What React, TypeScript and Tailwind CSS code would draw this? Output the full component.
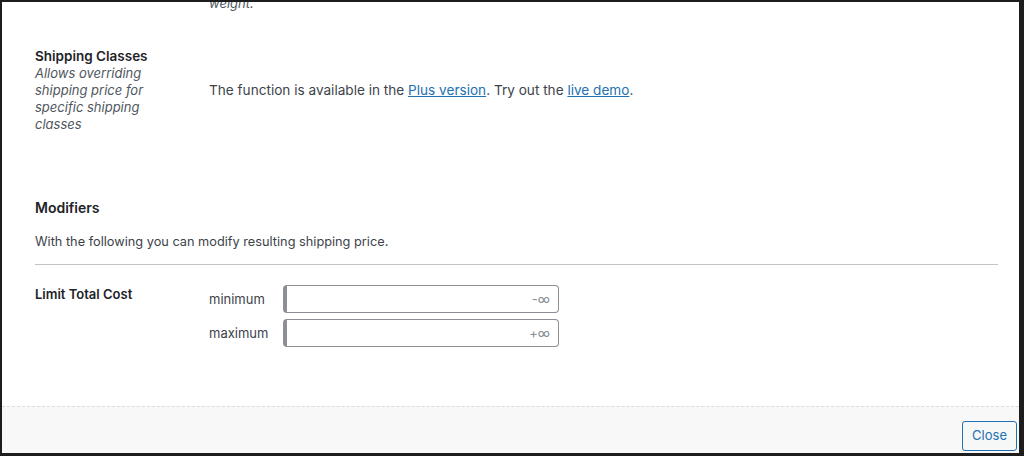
export default function App() {
  return (
    <div
      className="flex h-[456px] w-[1024px] flex-col overflow-hidden border-t-2 border-r-[5px] border-b-[3px] border-l-2 border-[#1d1d1d] bg-white text-[13px] text-[#3c434a]"
      style={{ fontFamily: "Inter, 'Noto Sans', sans-serif" }}
    >
      {/* scrolled body */}
      <div className="flex-1 overflow-hidden pr-[21px] pl-[33px]">
        <div className="-mt-[7px] pl-[174px] text-[13px] leading-[17px] text-[#50575e] italic">weight.</div>

        <div className="mt-[35px] flex">
          <div className="w-[174px] shrink-0">
            <div className="text-[13.5px] leading-[18px] font-semibold text-[#1d2327]">Shipping Classes</div>
            <div className="w-[120px] text-[13px] leading-[17px] text-[#50575e] italic">
              Allows overriding shipping price for specific shipping classes
            </div>
          </div>
          <div className="pt-[34px] text-[13.6px] leading-[18px]">
            The function is available in the{" "}
            <a href="#" className="text-[#2271b1] underline">Plus version</a>. Try out the{" "}
            <a href="#" className="text-[#2271b1] underline">live demo</a>.
          </div>
        </div>

        <div className="mt-[65px] text-[14px] leading-[20px] font-semibold text-[#1d2327]">Modifiers</div>
        <div className="mt-[15px] text-[12.75px] leading-[18px]">With the following you can modify resulting shipping price.</div>
        <div className="mt-[13px] border-t border-[#c3c4c7]" />

        <div className="mt-[20px] flex">
          <div className="w-[174px] shrink-0 text-[13px] leading-[18px] font-semibold text-[#1d2327]">Limit Total Cost</div>
          <div className="flex flex-col gap-[6px]">
            <Limit label="minimum" placeholder="-∞" />
            <Limit label="maximum" placeholder="+∞" />
          </div>
        </div>
      </div>

      {/* footer */}
      <div className="flex h-[47px] shrink-0 items-end justify-end border-t border-dashed border-[#dcdcde] bg-[#f8f8f8] pr-[2px] pb-[2px]">
        <button className="h-[30px] rounded-[3px] border border-[#2271b1] bg-[#f6f7f7] px-[9px] text-[13px] text-[#2271b1]">
          Close
        </button>
      </div>
    </div>
  );
}

function Limit(props: { label: string; placeholder: string }) {
  const { label, placeholder } = props;
  return (
    <div className="flex items-center">
      <span className="w-[74px] leading-[18px]">{label}</span>
      <input
        placeholder={placeholder}
        className="h-[28px] w-[276px] rounded-[4px] border border-l-4 border-[#8c8f94] px-2 text-right text-[13px] placeholder:text-[#8c8f94]"
      />
    </div>
  );
}
